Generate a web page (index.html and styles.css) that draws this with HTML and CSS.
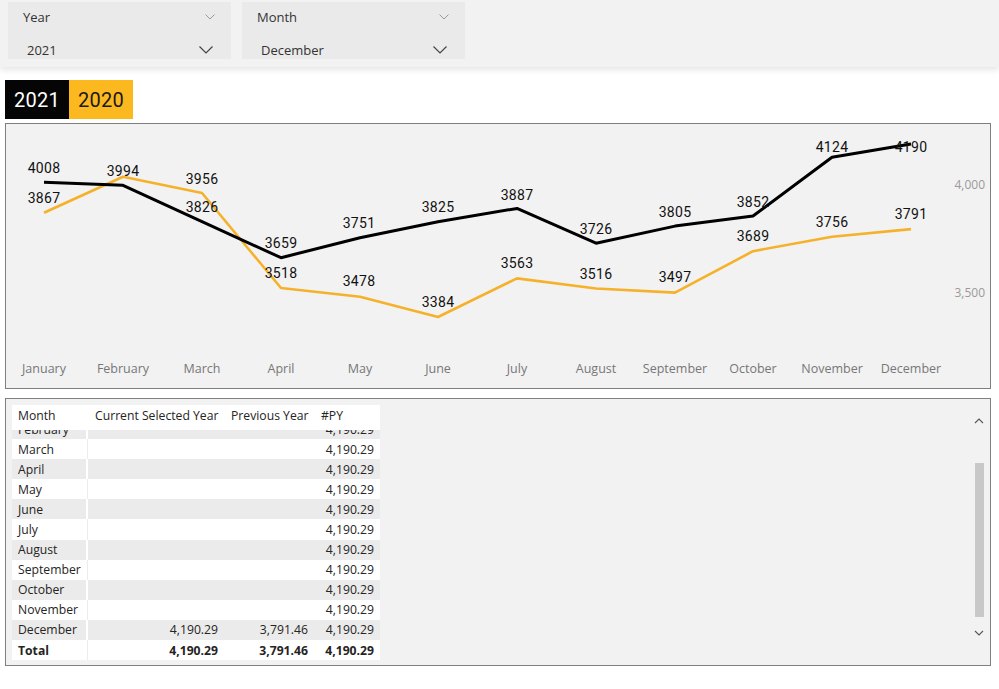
FILE: index.html
```html
<!DOCTYPE html>
<html lang="en">
<head>
<meta charset="utf-8">
<title>Report</title>
<link rel="stylesheet" href="styles.css">
</head>
<body>
<header class="topbar">
  <div class="slicer">
    <div class="slicer-head"><span>Year</span>
      <svg class="chev-sm" width="10" height="6" viewBox="0 0 10 6"><path d="M0.5 0.5 L5 5 L9.5 0.5" fill="none" stroke="#9a9a9a" stroke-width="1"/></svg>
    </div>
    <div class="slicer-val"><span>2021</span>
      <svg class="chev" width="14" height="8" viewBox="0 0 14 8"><path d="M0.5 0.5 L7 7 L13.5 0.5" fill="none" stroke="#444" stroke-width="1.2"/></svg>
    </div>
  </div>
  <div class="slicer">
    <div class="slicer-head"><span>Month</span>
      <svg class="chev-sm" width="10" height="6" viewBox="0 0 10 6"><path d="M0.5 0.5 L5 5 L9.5 0.5" fill="none" stroke="#9a9a9a" stroke-width="1"/></svg>
    </div>
    <div class="slicer-val"><span>December</span>
      <svg class="chev" width="14" height="8" viewBox="0 0 14 8"><path d="M0.5 0.5 L7 7 L13.5 0.5" fill="none" stroke="#444" stroke-width="1.2"/></svg>
    </div>
  </div>
</header>

<div class="legend">
  <div class="leg leg-black">2021</div>
  <div class="leg leg-yellow">2020</div>
</div>

<section class="panel chart-panel">
  <svg class="chart" width="984" height="264" viewBox="6 124 984 264">
    <polyline class="line-y" points="44,212.7 123,176.7 202,193 281,288 360,296.8 438,317 517,278.4 596,288.5 675,292.6 753,251.2 832,236.7 911,229.1"/>
    <polyline class="line-b" points="44,182.3 123,185.3 202,221.6 281,257.7 360,237.8 438,221.8 517,208.4 596,243.2 675,226.1 753,216 832,157.2 911,144"/>
    <g class="dl">
      <text x="44" y="173">4008</text>
      <text x="123" y="176">3994</text>
      <text x="202" y="212">3826</text>
      <text x="281" y="248">3659</text>
      <text x="359" y="228">3751</text>
      <text x="438" y="212">3825</text>
      <text x="517" y="200">3887</text>
      <text x="596" y="234">3726</text>
      <text x="675" y="217">3805</text>
      <text x="753" y="207">3852</text>
      <text x="832" y="152">4124</text>
      <text x="911" y="152">4190</text>
      <text x="44" y="203">3867</text>
      <text x="202" y="184">3956</text>
      <text x="281" y="278">3518</text>
      <text x="359" y="286">3478</text>
      <text x="438" y="307">3384</text>
      <text x="517" y="268">3563</text>
      <text x="596" y="279">3516</text>
      <text x="675" y="282">3497</text>
      <text x="753" y="241">3689</text>
      <text x="832" y="227">3756</text>
      <text x="911" y="219">3791</text>
    </g>
    <g class="xl">
      <text x="44" y="373">January</text>
      <text x="123" y="373">February</text>
      <text x="202" y="373">March</text>
      <text x="281" y="373">April</text>
      <text x="360" y="373">May</text>
      <text x="438" y="373">June</text>
      <text x="517" y="373">July</text>
      <text x="596" y="373">August</text>
      <text x="675" y="373">September</text>
      <text x="753" y="373">October</text>
      <text x="832" y="373">November</text>
      <text x="911" y="373">December</text>
    </g>
    <g class="yl">
      <text x="985" y="188.5">4,000</text>
      <text x="985" y="296.5">3,500</text>
    </g>
  </svg>
</section>

<section class="panel table-panel">
  <div class="tbl">
    <div class="row head">
      <div class="c c1">Month</div><div class="c">Current Selected Year</div><div class="c">Previous Year</div><div class="c">#PY</div>
    </div>
    <div class="viewport">
      <div class="rows">
        <div class="row g"><div class="c c1">February</div><div class="c r"></div><div class="c r"></div><div class="c r">4,190.29</div></div>
        <div class="row w"><div class="c c1">March</div><div class="c r"></div><div class="c r"></div><div class="c r">4,190.29</div></div>
        <div class="row g"><div class="c c1">April</div><div class="c r"></div><div class="c r"></div><div class="c r">4,190.29</div></div>
        <div class="row w"><div class="c c1">May</div><div class="c r"></div><div class="c r"></div><div class="c r">4,190.29</div></div>
        <div class="row g"><div class="c c1">June</div><div class="c r"></div><div class="c r"></div><div class="c r">4,190.29</div></div>
        <div class="row w"><div class="c c1">July</div><div class="c r"></div><div class="c r"></div><div class="c r">4,190.29</div></div>
        <div class="row g"><div class="c c1">August</div><div class="c r"></div><div class="c r"></div><div class="c r">4,190.29</div></div>
        <div class="row w"><div class="c c1">September</div><div class="c r"></div><div class="c r"></div><div class="c r">4,190.29</div></div>
        <div class="row g"><div class="c c1">October</div><div class="c r"></div><div class="c r"></div><div class="c r">4,190.29</div></div>
        <div class="row w"><div class="c c1">November</div><div class="c r"></div><div class="c r"></div><div class="c r">4,190.29</div></div>
        <div class="row g"><div class="c c1">December</div><div class="c r">4,190.29</div><div class="c r">3,791.46</div><div class="c r">4,190.29</div></div>
      </div>
    </div>
    <div class="row w total"><div class="c c1">Total</div><div class="c r">4,190.29</div><div class="c r">3,791.46</div><div class="c r">4,190.29</div></div>
  </div>
  <div class="scrollbar">
    <svg class="arrow" width="10" height="16" viewBox="0 0 10 16"><path d="M1 10 L5 6 L9 10" fill="none" stroke="#555" stroke-width="1.1"/></svg>
    <div class="thumb"></div>
    <svg class="arrow" width="10" height="16" viewBox="0 0 10 16"><path d="M1 6 L5 10 L9 6" fill="none" stroke="#555" stroke-width="1.1"/></svg>
  </div>
</section>
</body>
</html>
```

FILE: styles.css
```css
* { box-sizing: border-box; }
body {
  margin: 0;
  background: #ffffff;
  font-family: "Open Sans", "Noto Sans", sans-serif;
  color: #252423;
  width: 999px;
  height: 689px;
  overflow: hidden;
}
.topbar {
  height: 67px;
  background: #f2f2f2;
  box-shadow: 0 3px 6px rgba(0,0,0,0.10);
  display: flex;
  gap: 11px;
  padding: 2px 8px 0;
}
.slicer {
  width: 223px;
  height: 57px;
  background: #eaeaea;
  display: flex;
  flex-direction: column;
}
.slicer-head {
  height: 30px;
  display: flex;
  align-items: center;
  justify-content: space-between;
  padding: 0 16px 0 15px;
  font-size: 13px;
  color: #333;
}
.slicer-val {
  height: 27px;
  display: flex;
  align-items: center;
  justify-content: space-between;
  padding: 9px 18px 0 19px;
  font-size: 13px;
  color: #333;
}
.legend {
  display: flex;
  margin: 13px 0 0 5px;
}
.leg {
  width: 64px;
  height: 39px;
  display: flex;
  align-items: center;
  justify-content: center;
  font-family: "Roboto", "DejaVu Sans Condensed", sans-serif;
  font-size: 20px;
  letter-spacing: 0.2px;
}
.leg-black { background: #050505; color: #ffffff; }
.leg-yellow { background: #fbb81f; color: #1a1a1a; }
.panel {
  margin-left: 5px;
  width: 986px;
  background: #f2f2f2;
  border: 1px solid #7f7f7f;
}
.chart-panel {
  margin-top: 4px;
  height: 266px;
}
.chart { display: block; }
.line-b { fill: none; stroke: #000000; stroke-width: 3; stroke-linejoin: round; }
.line-y { fill: none; stroke: #f6b12b; stroke-width: 2.6; stroke-linejoin: round; }
.dl text {
  font-family: "Roboto", sans-serif;
  font-size: 14px;
  fill: #111;
  text-anchor: middle;
  letter-spacing: 0.3px;
}
.xl text {
  font-family: "Open Sans", sans-serif;
  font-size: 12.5px;
  fill: #777777;
  text-anchor: middle;
}
.yl text {
  font-family: "Open Sans", sans-serif;
  font-size: 12px;
  fill: #9a9a9a;
  text-anchor: end;
}
.table-panel {
  margin-top: 9px;
  height: 268px;
  display: flex;
  padding: 6px 0 0 6px;
}
.tbl {
  width: 368px;
  display: flex;
  flex-direction: column;
  font-size: 12.2px;
}
.row {
  display: grid;
  grid-template-columns: 76px 136px 90px 66px;
  height: 20.1px;
  align-items: center;
}
.row.head {
  height: 25px;
  background: #ffffff;
  align-items: start;
  padding-top: 2px;
}
.row.head .c { padding-left: 7px; }
.row.head .c1 { padding-left: 6px; }
.c {
  white-space: nowrap;
  height: 100%;
  display: flex;
  align-items: center;
}
.row.head .c { align-items: flex-start; }
.c1 { padding-left: 6px; }
.c.r { justify-content: flex-end; padding-right: 6px; }
.row.g { background: #ebebeb; }
.row.w { background: #ffffff; }
.row.g .c1 { box-shadow: inset -2px 0 0 #ffffff; }
.row.w .c1 { box-shadow: inset -1px 0 0 #ececec; }
.viewport {
  height: 210px;
  overflow: hidden;
}
.rows { margin-top: -11px; }
.total { font-weight: 700; }
.scrollbar {
  margin-left: auto;
  margin-right: 6px;
  width: 10px;
  display: flex;
  flex-direction: column;
  align-items: center;
  padding-top: 8px;
}
.arrow { display: block; }
.thumb {
  width: 9px;
  height: 154px;
  margin: 34px 0 8px;
  background: #c8c8c8;
}
```
